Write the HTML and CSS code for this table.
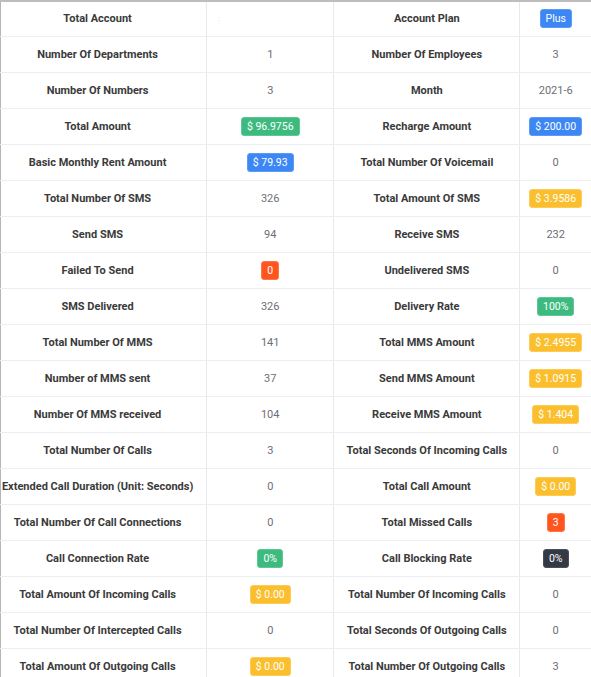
FILE: index.html
```html
<!DOCTYPE html>
<html>
<head>
<meta charset="utf-8">
<link rel="stylesheet" href="styles.css">
</head>
<body>
<table class="stats">
<colgroup><col class="c1"><col class="c2"><col class="c3"><col class="c4"></colgroup>
<tbody>
<tr class="first"><th>Total Account</th><td class="left"><span class="dot">:</span></td><th>Account Plan</th><td><span class="tag blue">Plus</span></td></tr>
<tr><th>Number Of Departments</th><td>1</td><th>Number Of Employees</th><td>3</td></tr>
<tr><th>Number Of Numbers</th><td>3</td><th>Month</th><td>2021-6</td></tr>
<tr><th>Total Amount</th><td><span class="tag green">$ 96.9756</span></td><th>Recharge Amount</th><td><span class="tag blue">$ 200.00</span></td></tr>
<tr><th>Basic Monthly Rent Amount</th><td><span class="tag blue">$ 79.93</span></td><th>Total Number Of Voicemail</th><td>0</td></tr>
<tr><th>Total Number Of SMS</th><td>326</td><th>Total Amount Of SMS</th><td><span class="tag yellow">$ 3.9586</span></td></tr>
<tr><th>Send SMS</th><td>94</td><th>Receive SMS</th><td>232</td></tr>
<tr><th>Failed To Send</th><td><span class="tag red">0</span></td><th>Undelivered SMS</th><td>0</td></tr>
<tr><th>SMS Delivered</th><td>326</td><th>Delivery Rate</th><td><span class="tag green">100%</span></td></tr>
<tr><th>Total Number Of MMS</th><td>141</td><th>Total MMS Amount</th><td><span class="tag yellow">$ 2.4955</span></td></tr>
<tr><th>Number of MMS sent</th><td>37</td><th>Send MMS Amount</th><td><span class="tag yellow">$ 1.0915</span></td></tr>
<tr><th>Number Of MMS received</th><td>104</td><th>Receive MMS Amount</th><td><span class="tag yellow">$ 1.404</span></td></tr>
<tr><th>Total Number Of Calls</th><td>3</td><th>Total Seconds Of Incoming Calls</th><td>0</td></tr>
<tr><th>Extended Call Duration (Unit: Seconds)</th><td>0</td><th>Total Call Amount</th><td><span class="tag yellow">$ 0.00</span></td></tr>
<tr><th>Total Number Of Call Connections</th><td>0</td><th>Total Missed Calls</th><td><span class="tag red">3</span></td></tr>
<tr><th>Call Connection Rate</th><td><span class="tag green">0%</span></td><th>Call Blocking Rate</th><td><span class="tag dark">0%</span></td></tr>
<tr><th>Total Amount Of Incoming Calls</th><td><span class="tag yellow">$ 0.00</span></td><th>Total Number Of Incoming Calls</th><td>0</td></tr>
<tr><th>Total Number Of Intercepted Calls</th><td>0</td><th>Total Seconds Of Outgoing Calls</th><td>0</td></tr>
<tr><th>Total Amount Of Outgoing Calls</th><td><span class="tag yellow">$ 0.00</span></td><th>Total Number Of Outgoing Calls</th><td>3</td></tr>
</tbody>
</table>
</body>
</html>
```
FILE: styles.css
```css
html, body {
  margin: 0;
  padding: 0;
  background: #ffffff;
}
.stats {
  width: 591px;
  table-layout: fixed;
  border-collapse: collapse;
  font-family: Roboto, "Liberation Sans", sans-serif;
  font-size: 11px;
  border-top: 2px solid #bdbdbd;
  border-left: 1px solid #b5b5b5;
}
.c1 { width: 206px; }
.c2 { width: 127px; }
.c3 { width: 186px; }
.c4 { width: 71px; }
.stats th, .stats td {
  padding: 8px 0;
  height: 19px;
  line-height: 19px;
  text-align: center;
  border-bottom: 1px solid #eceef3;
  border-right: 1px solid #e6eaf0;
  white-space: nowrap;
}
.stats th:first-child {
  padding-right: 12px;
}
.stats .first th, .stats .first td {
  padding-top: 6px;
}
.stats td:last-child { border-right: none; }
.stats th {
  font-weight: 700;
  color: #3a3a3a;
}
.stats td {
  color: #6e6e76;
  font-weight: 400;
}
.stats td.left { text-align: left; }
.dot {
  margin-left: 11px;
  font-size: 8px;
  color: #f2d7a6;
}
.tag {
  display: inline-block;
  box-sizing: border-box;
  height: 19px;
  line-height: 17px;
  padding: 0 5px;
  border-radius: 3px;
  color: #ffffff;
  font-size: 10.5px;
  vertical-align: top;
  border: 1px solid transparent;
}
.blue { background: #3d87f5; border-color: #5b9af7; }
.green { background: #3dbb7f; border-color: #5fc796; }
.yellow { background: #fbbf2e; border-color: #fccb58; }
.red { background: #ff5620; border-color: #ff7648; }
.dark { background: #343a45; border-color: #4a505a; }
```
